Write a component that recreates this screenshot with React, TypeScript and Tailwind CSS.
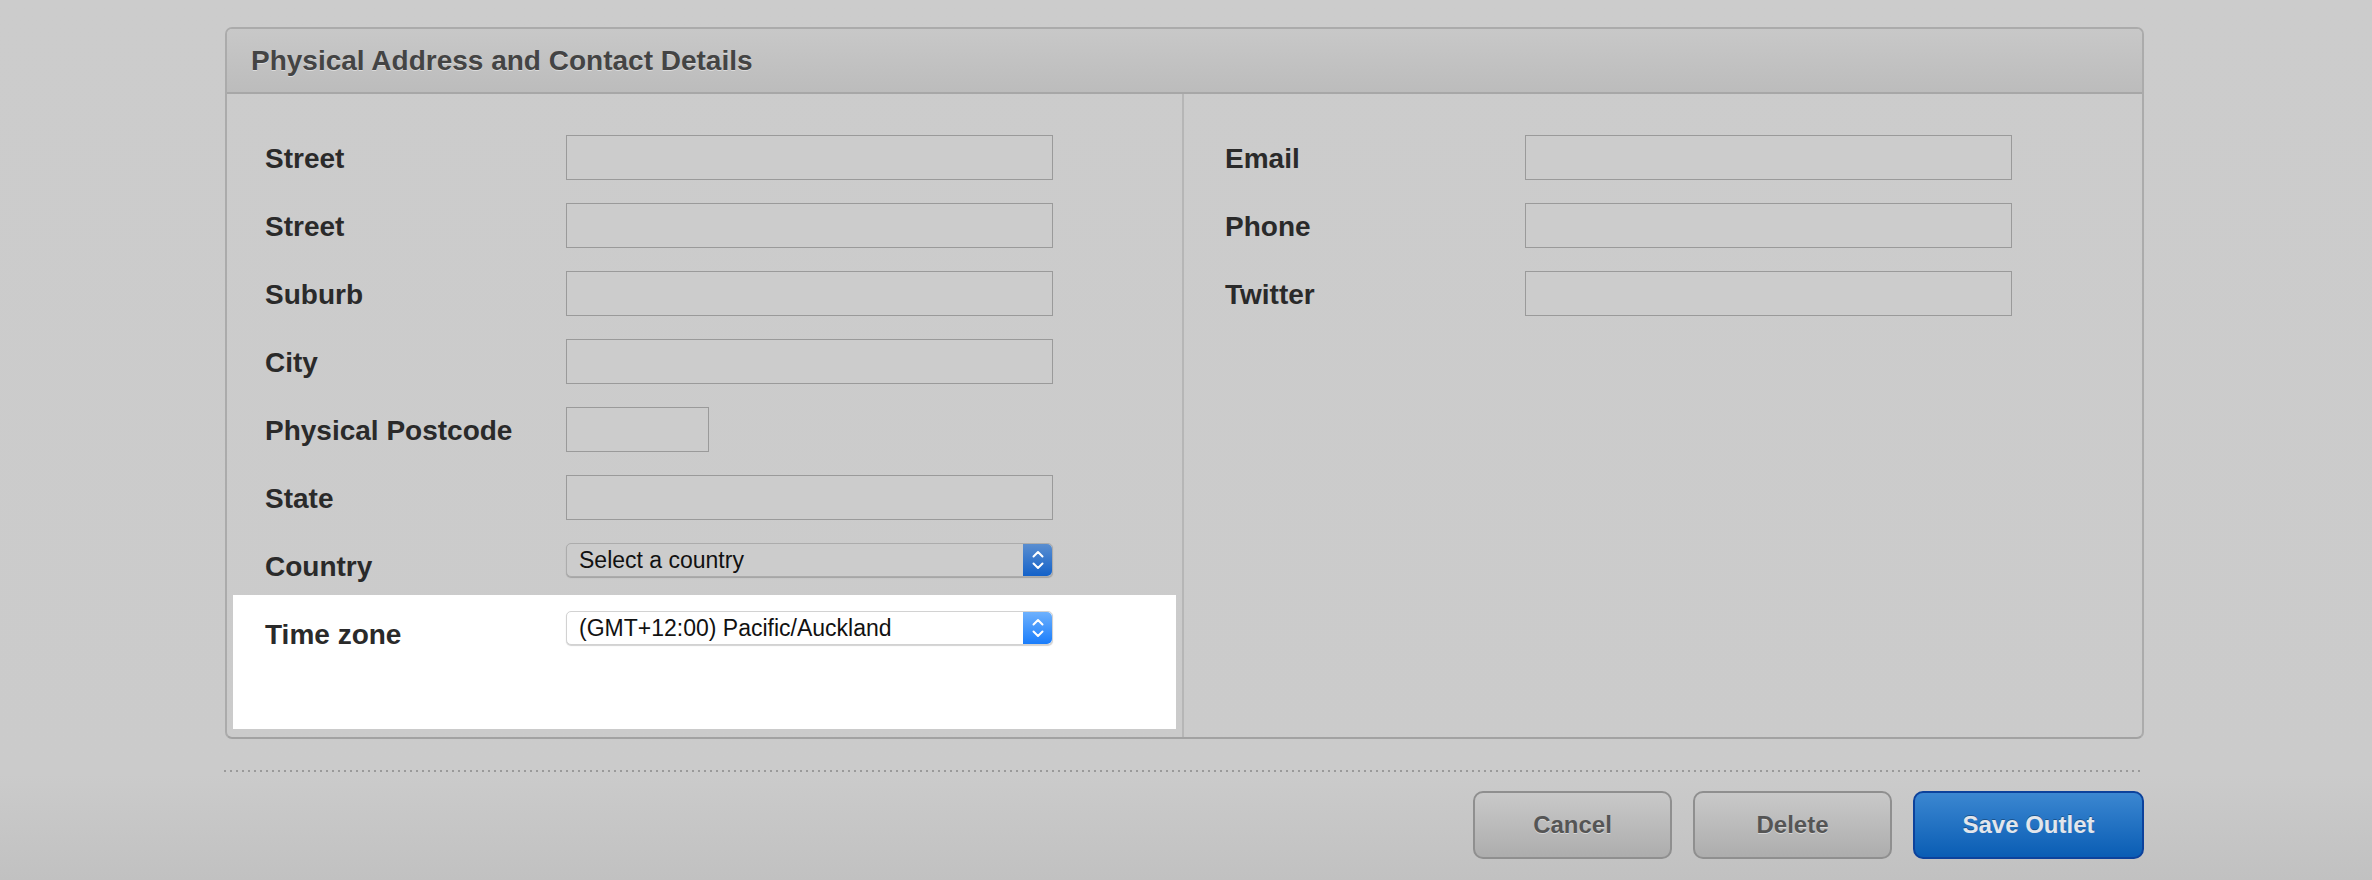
import type { ReactNode } from 'react';

const font = { fontFamily: '"Liberation Sans", Arial, sans-serif' };

const Chevrons = () => (
  <svg width="14" height="22" viewBox="0 0 14 22" fill="none">
    <path d="M2.5 7.5 L7 3 L11.5 7.5" stroke="white" strokeWidth="2" strokeLinecap="round" strokeLinejoin="round" />
    <path d="M2.5 14.5 L7 19 L11.5 14.5" stroke="white" strokeWidth="2" strokeLinecap="round" strokeLinejoin="round" />
  </svg>
);

const TextBox = ({ small }: { small?: boolean }) => (
  <div className={`h-[45px] border border-[#9a9a9a] bg-[#cccccc] ${small ? 'w-[143px]' : 'w-[487px]'}`} />
);

const Select = ({ value, active }: { value: string; active?: boolean }) => (
  <div
    className={`flex h-[34px] w-[487px] items-stretch rounded-[5px] border ${
      active
        ? 'border-[#d2d2d2] bg-white shadow-[0_1px_1px_rgba(0,0,0,0.18)]'
        : 'border-[#acacac] bg-[#cccccc] shadow-[0_1px_1px_rgba(0,0,0,0.2)]'
    }`}
  >
    <div className="flex flex-1 items-center pl-[12px] text-[23px] text-[#111]">{value}</div>
    <div
      className={`flex w-[29px] items-center justify-center rounded-r-[5px] ${
        active
          ? 'bg-[linear-gradient(to_bottom,#6eb1fd,#1a7dfb)]'
          : 'bg-[linear-gradient(to_bottom,#5a8ed0,#1462c9)]'
      }`}
    >
      <Chevrons />
    </div>
  </div>
);

const Row = ({ label, width, children }: { label: string; width: string; children: ReactNode }) => (
  <div className="flex h-[45px] items-start">
    <div className={`flex h-[45px] items-center pt-[3px] text-[28px] font-bold text-[#2a2a2a] ${width}`}>{label}</div>
    {children}
  </div>
);

const Button = ({ label, primary }: { label: string; primary?: boolean }) => (
  <button
    className={`flex h-[68px] items-center justify-center rounded-[10px] border-2 text-[24px] font-bold ${
      primary
        ? 'w-[231px] border-[#0c429c] bg-[linear-gradient(to_bottom,#3b87d1,#0a5db4)] text-[#e2e6ec] [text-shadow:0_-1px_0_rgba(0,0,0,0.3)]'
        : 'w-[199px] border-[#8f8f8f] bg-[linear-gradient(to_bottom,#c9c9c9,#adadad)] text-[#555] [text-shadow:0_1px_0_rgba(255,255,255,0.45)]'
    }`}
  >
    {label}
  </button>
);

const App = () => {
  const leftFields = ['Street', 'Street', 'Suburb', 'City'];

  return (
    <div
      className="h-[880px] w-[2372px] overflow-hidden bg-[linear-gradient(to_bottom,#cccccc_0%,#cbcbcb_88%,#c1c1c1_100%)] pt-[27px]"
      style={font}
    >
      {/* Panel */}
      <div className="ml-[225px] w-[1919px] rounded-[7px] border-2 border-[#ababab] border-b-[#a2a2a2]">
        <div className="flex h-[65px] items-center rounded-t-[5px] border-b-2 border-[#a7a7a7] bg-[linear-gradient(to_bottom,#c8c8c8,#bcbcbc)] pl-[24px] pt-[1px] text-[28px] font-bold text-[#444] [text-shadow:0_1px_0_rgba(255,255,255,0.45)]">
          Physical Address and Contact Details
        </div>

        <div className="flex h-[643px]">
          {/* Left column */}
          <div className="flex w-[955px] flex-col px-[6px] pt-[41px]">
            <div className="flex flex-col gap-[23px] pl-[32px]">
              {leftFields.map((f, i) => (
                <Row key={i} label={f} width="w-[301px]">
                  <TextBox />
                </Row>
              ))}
              <Row label="Physical Postcode" width="w-[301px]">
                <TextBox small />
              </Row>
              <Row label="State" width="w-[301px]">
                <TextBox />
              </Row>
              <Row label="Country" width="w-[301px]">
                <Select value="Select a country" />
              </Row>
            </div>
            <div className="mt-[7px] h-[134px] bg-white pl-[32px] pt-[16px]">
              <Row label="Time zone" width="w-[301px]">
                <Select value="(GMT+12:00) Pacific/Auckland" active />
              </Row>
            </div>
          </div>

          <div className="w-[2px] bg-[#b6b6b6]" />

          {/* Right column */}
          <div className="flex flex-1 flex-col gap-[23px] pl-[41px] pt-[41px]">
            <Row label="Email" width="w-[300px]">
              <TextBox />
            </Row>
            <Row label="Phone" width="w-[300px]">
              <TextBox />
            </Row>
            <Row label="Twitter" width="w-[300px]">
              <TextBox />
            </Row>
          </div>
        </div>
      </div>

      {/* Dotted separator */}
      <div className="ml-[224px] mt-[31px] h-[2px] w-[1916px] bg-[repeating-linear-gradient(to_right,#9a9a9a_0px,#9a9a9a_2px,transparent_2px,transparent_6px)]" />

      {/* Actions */}
      <div className="ml-[225px] mt-[19px] flex w-[1919px] justify-end gap-[21px]">
        <Button label="Cancel" />
        <Button label="Delete" />
        <Button label="Save Outlet" primary />
      </div>
    </div>
  );
};

export default App;
